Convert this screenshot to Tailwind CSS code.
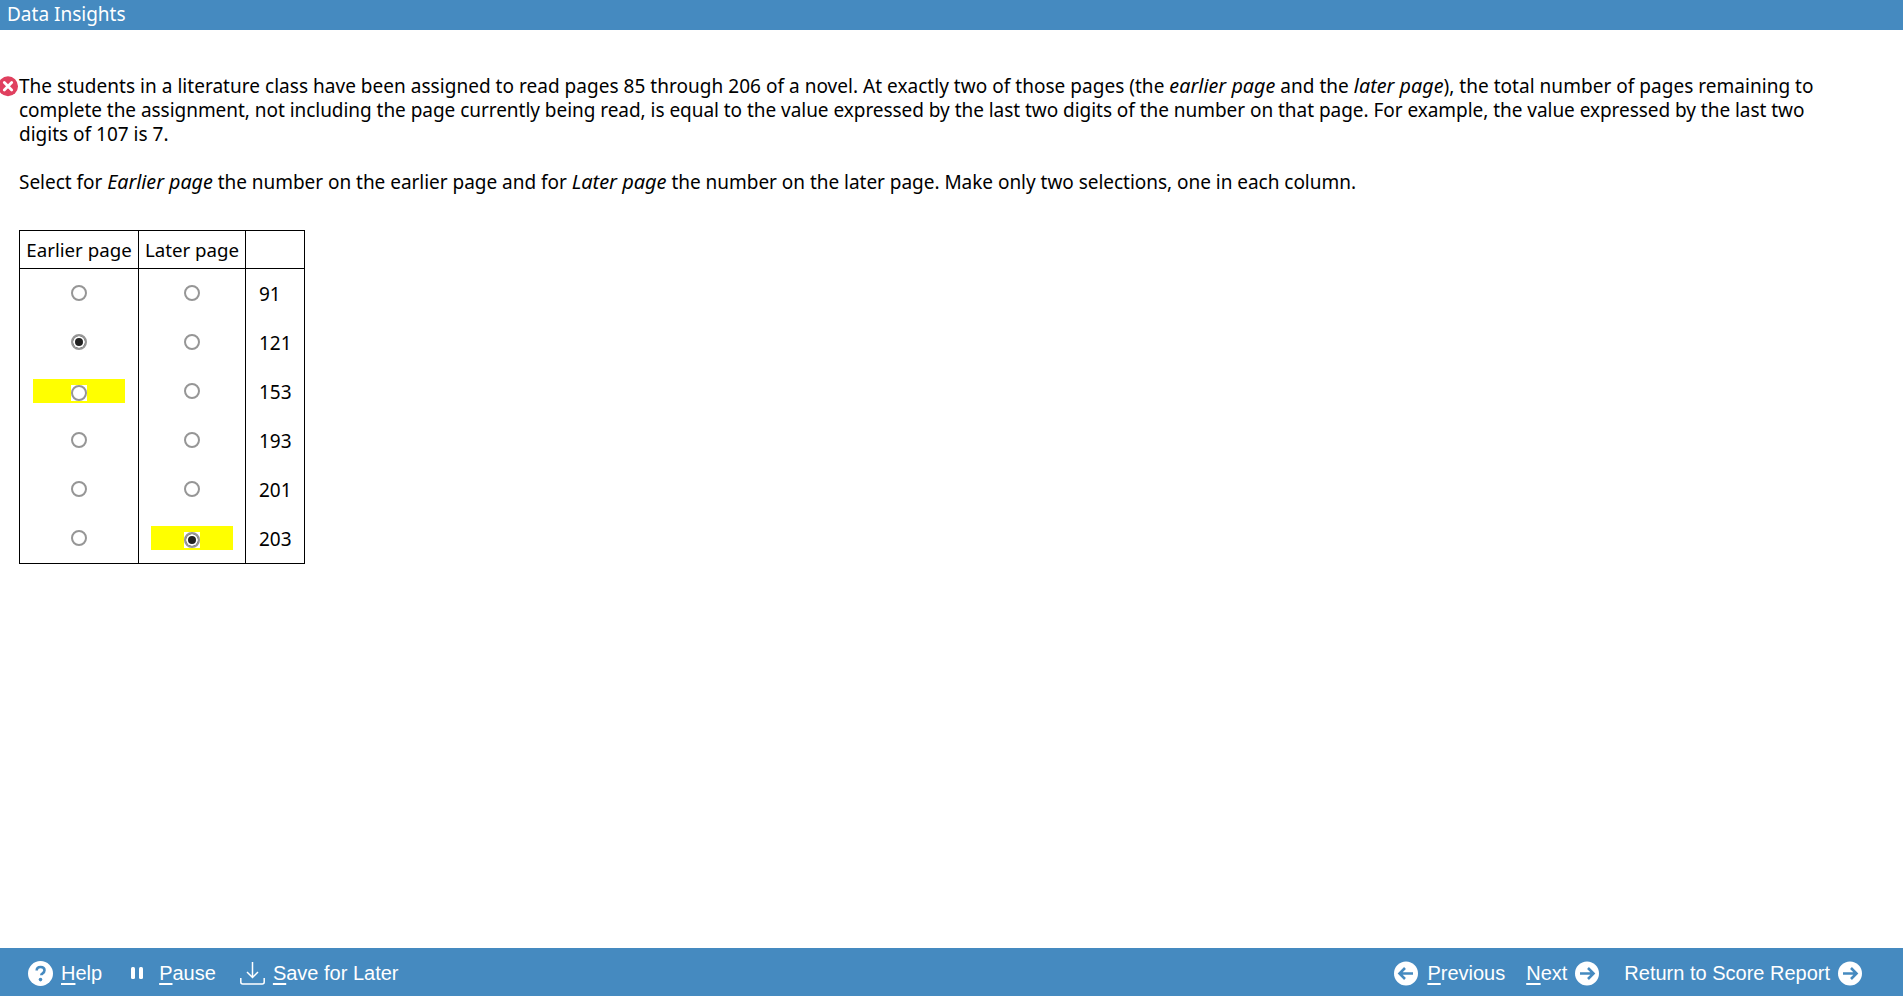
<!DOCTYPE html>
<html lang="en">
<head>
  <meta charset="UTF-8" />
  <title>Data Insights</title>
  <script src="https://cdn.jsdelivr.net/npm/@tailwindcss/browser@4"></script>
</head>
<body class="bg-white h-[996px] overflow-hidden flex flex-col font-['Noto_Sans',sans-serif] text-black">
  <!-- Top bar -->
  <div class="bg-[#458ac0] text-white h-[30px] pl-[7px] text-[19px] leading-[28px] shrink-0">Data Insights</div>

  <!-- Question -->
  <div class="flex-1 pt-[44px] pl-[19px] pr-[60px] relative">
    <svg class="absolute left-0 top-[45px]" width="20" height="22" viewBox="0 0 20 22">
      <circle cx="8" cy="11.200" r="10" fill="#e0405f" />
      <path d="M4.300 7.500l7.400 7.400M11.700 7.500l-7.400 7.400" stroke="#fff" stroke-width="2.800" stroke-linecap="round" />
    </svg>
    <p class="text-[19px] leading-[24px]"><span class="tracking-[0.030px]">The students in a literature class have been assigned to read pages 85 through 206 of a novel. At exactly two of those pages (the <i class="text-[19.700px]">earlier page</i> and the <i class="text-[19.700px]">later page</i>), the total number of pages remaining to</span> <span class="tracking-[-0.040px]">complete the assignment, not including the page currently being read, is equal to the value expressed by the last two digits of the number on that page. For example, the value expressed by the last two</span> digits of 107 is 7.</p>
    <p class="text-[19px] leading-[24px] mt-[24px] tracking-[-0.030px]">Select for <i class="text-[19.700px]">Earlier page</i> the number on the earlier page and for <i class="text-[20px]">Later page</i> the number on the later page. Make only two selections, one in each column.</p>

    <table class="mt-[36px] border-collapse border border-black text-[19px] leading-[24px]">
      <thead>
        <tr class="h-[38px] border-b border-black">
          <th class="font-normal w-[119px] border-r border-black px-0 text-[18.700px]">Earlier page</th>
          <th class="font-normal w-[107px] border-r border-black px-0 text-[18.700px]">Later page</th>
          <th class="w-[59px]"></th>
        </tr>
      </thead>
      <tbody>
        <tr class="h-[49px]">
          <td class="border-r border-black text-center"><input type="radio" name="a1" class="appearance-none align-middle mb-[4px] w-[16px] h-[16px] rounded-full border-2 border-[#969696] bg-white" /></td>
          <td class="border-r border-black text-center"><input type="radio" name="b1" class="appearance-none align-middle mb-[4px] w-[16px] h-[16px] rounded-full border-2 border-[#969696] bg-white" /></td>
          <td class="pl-[13px] pt-[2px]">91</td>
        </tr>
        <tr class="h-[49px]">
          <td class="border-r border-black text-center"><input type="radio" name="a1" checked class="appearance-none align-middle mb-[4px] w-[16px] h-[16px] rounded-full border-2 border-[#969696] bg-white checked:bg-[#222] checked:shadow-[inset_0_0_0_2px_#fff]" /></td>
          <td class="border-r border-black text-center"><input type="radio" name="b1" class="appearance-none align-middle mb-[4px] w-[16px] h-[16px] rounded-full border-2 border-[#969696] bg-white" /></td>
          <td class="pl-[13px] pt-[2px]">121</td>
        </tr>
        <tr class="h-[49px]">
          <td class="border-r border-black">
            <div class="mx-auto w-[92px] h-[24px] bg-[#ffff00] flex justify-center">
              <span class="bg-white w-[16px] h-[16px] mt-[6px] block"><input type="radio" name="a1" class="appearance-none block w-[16px] h-[16px] rounded-full border-2 border-[#969696] bg-white" /></span>
            </div>
          </td>
          <td class="border-r border-black text-center"><input type="radio" name="b1" class="appearance-none align-middle mb-[4px] w-[16px] h-[16px] rounded-full border-2 border-[#969696] bg-white" /></td>
          <td class="pl-[13px] pt-[2px]">153</td>
        </tr>
        <tr class="h-[49px]">
          <td class="border-r border-black text-center"><input type="radio" name="a1" class="appearance-none align-middle mb-[4px] w-[16px] h-[16px] rounded-full border-2 border-[#969696] bg-white" /></td>
          <td class="border-r border-black text-center"><input type="radio" name="b1" class="appearance-none align-middle mb-[4px] w-[16px] h-[16px] rounded-full border-2 border-[#969696] bg-white" /></td>
          <td class="pl-[13px] pt-[2px]">193</td>
        </tr>
        <tr class="h-[49px]">
          <td class="border-r border-black text-center"><input type="radio" name="a1" class="appearance-none align-middle mb-[4px] w-[16px] h-[16px] rounded-full border-2 border-[#969696] bg-white" /></td>
          <td class="border-r border-black text-center"><input type="radio" name="b1" class="appearance-none align-middle mb-[4px] w-[16px] h-[16px] rounded-full border-2 border-[#969696] bg-white" /></td>
          <td class="pl-[13px] pt-[2px]">201</td>
        </tr>
        <tr class="h-[50px]">
          <td class="border-r border-black text-center"><input type="radio" name="a1" class="appearance-none align-middle mb-[4px] w-[16px] h-[16px] rounded-full border-2 border-[#969696] bg-white" /></td>
          <td class="border-r border-black">
            <div class="mx-auto w-[82px] h-[24px] bg-[#ffff00] flex justify-center">
              <span class="bg-white w-[16px] h-[16px] mt-[6px] block"><input type="radio" name="b1" checked class="appearance-none block w-[16px] h-[16px] rounded-full border-2 border-[#969696] bg-white checked:bg-[#222] checked:shadow-[inset_0_0_0_2px_#fff]" /></span>
            </div>
          </td>
          <td class="pl-[13px] pt-[2px]">203</td>
        </tr>
      </tbody>
    </table>
  </div>

  <!-- Bottom bar -->
  <div class="bg-[#458ac0] text-white h-[48px] shrink-0 flex items-center justify-between pt-[2px] pl-[28px] pr-[41px] font-['Liberation_Sans',sans-serif] text-[20px]">
    <div class="flex items-center">
      <svg width="25" height="25" viewBox="0 0 25 25">
        <circle cx="12.500" cy="12.500" r="12.500" fill="#fff" />
        <path d="M8.700 9.600c0-2.200 1.700-3.600 3.900-3.600 2.300 0 3.900 1.300 3.900 3.300 0 1.500-.8 2.300-1.900 3-1 .6-1.300 1-1.300 2" fill="none" stroke="#458ac0" stroke-width="2.600" />
        <circle cx="12.500" cy="18.600" r="1.800" fill="#458ac0" />
      </svg>
      <span class="ml-[8px]"><u class="decoration-2 underline-offset-3">H</u>elp</span>
      <svg class="ml-[29px]" width="13" height="14" viewBox="0 0 13 14">
        <rect x="0" y="1" width="4" height="12" rx="1.500" fill="#fff" />
        <rect x="8" y="1" width="4" height="12" rx="1.500" fill="#fff" />
      </svg>
      <span class="ml-[15px]"><u class="decoration-2 underline-offset-3">P</u>ause</span>
      <svg class="ml-[24px]" width="25" height="23" viewBox="0 0 25 23" fill="none" stroke="#fff" stroke-width="1.500">
        <path d="M12.500 0v15M7 10l5.500 5.500L18 10" />
        <path d="M.8 16v4q0 2 2 2h19.400q2 0 2-2v-4" />
      </svg>
      <span class="ml-[8px]"><u class="decoration-2 underline-offset-3">S</u>ave for Later</span>
    </div>
    <div class="flex items-center">
      <svg width="24" height="25" viewBox="0 0 24 25">
        <circle cx="12" cy="12.500" r="12" fill="#fff" />
        <path d="M19 12.500H6M11 7l-5.500 5.500L11 18" fill="none" stroke="#458ac0" stroke-width="2.600" />
      </svg>
      <span class="ml-[9px]"><u class="decoration-2 underline-offset-3">P</u>revious</span>
      <span class="ml-[21px]"><u class="decoration-2 underline-offset-3">N</u>ext</span>
      <svg class="ml-[8px]" width="24" height="25" viewBox="0 0 24 25">
        <circle cx="12" cy="12.500" r="12" fill="#fff" />
        <path d="M5 12.500h13M13 7l5.500 5.500L13 18" fill="none" stroke="#458ac0" stroke-width="2.600" />
      </svg>
      <span class="ml-[25px]">Return to Score Report</span>
      <svg class="ml-[8px]" width="24" height="25" viewBox="0 0 24 25">
        <circle cx="12" cy="12.500" r="12" fill="#fff" />
        <path d="M5 12.500h13M13 7l5.500 5.500L13 18" fill="none" stroke="#458ac0" stroke-width="2.600" />
      </svg>
    </div>
  </div>
</body>
</html>
